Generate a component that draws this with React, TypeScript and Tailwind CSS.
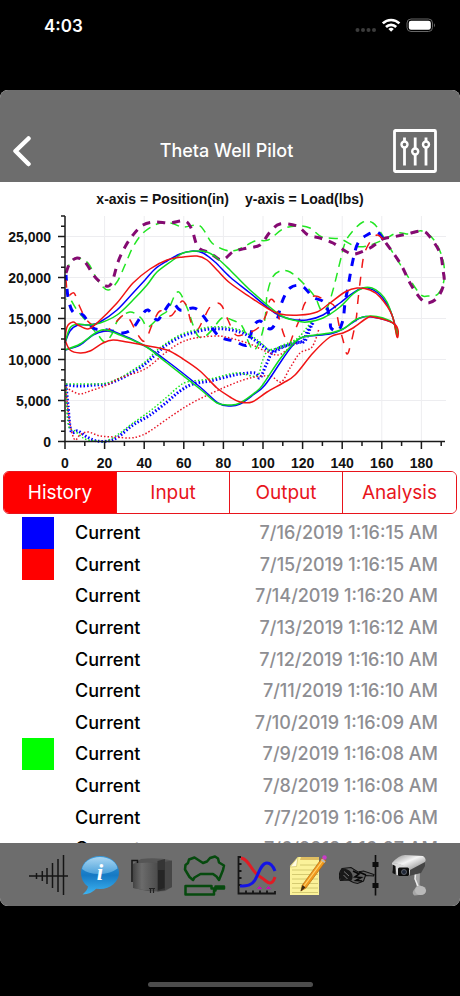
import { useState } from "react";

type Point = [number, number];

type Series = {
  color: string;
  width: number;
  dash?: string;
  points: string;
};

function parse(points: string): Point[] {
  return points
    .trim()
    .split(/\s+/)
    .map((pair) => pair.split(",").map(Number) as Point);
}

/* Catmull-Rom spline through the sampled points. */
function curve(source: string): string {
  const p = parse(source);
  let d = `M${p[0][0]} ${p[0][1]}`;
  for (let i = 0; i < p.length - 1; i++) {
    const a = p[i - 1] ?? p[i];
    const b = p[i];
    const c = p[i + 1];
    const e = p[i + 2] ?? c;
    d += `C${b[0] + (c[0] - a[0]) / 6} ${b[1] + (c[1] - a[1]) / 6} ${c[0] - (e[0] - b[0]) / 6} ${c[1] - (e[1] - b[1]) / 6} ${c[0]} ${c[1]}`;
  }
  return d;
}

const BLUE = "#0000ff";
const RED = "#ff0000";
const GREEN = "#00ff00";

const series: Series[] = [
  {
    color: "#22e622",
    width: 1.5,
    dash: "9 6",
    points:
      "66,273 70,263 77,258 88,263 98,281 108,290 117,282 125,265 133,247 143,233 157,224 170,223 183,227 198,225 205,232 212,243 225,250 237,250 255,241 268,240 283,229 297,226 310,228 322,237 340,239 355,246 367,246 383,240 397,233 410,234 422,231 434,240 443,260 444,280 438,294 428,296 420,294 405,272 390,248 381,233 373,223 363,222 352,232 345,243 340,262 333,290 327,308 321,310 315,297 303,283 290,272 280,271 272,278 267,295 266,310 263,330 258,345 253,350 248,341 242,326 232,320 222,318 212,330 204,337 198,336 193,325 188,310 180,293 175,295 168,310 160,316 148,327 141,318 130,312 118,320 112,334 105,342 98,335 87,322 77,310 70,299 66,299",
  },
  {
    color: BLUE,
    width: 3,
    dash: "8 8",
    points:
      "383,239 377,232 367,235 358,243 353,260 348,287 345,303 343,320 338,331 331,328 330,320 325,303 313,297 302,286 290,288 282,302 277,320 270,329 260,321 253,327 247,345 234,341 220,337 210,325 200,312 193,308 180,310 172,302 163,313 157,320 148,310 142,315 133,328 123,333 107,330 93,328 83,315 73,312 68,297 66,275",
  },
  {
    color: "#850a72",
    width: 3,
    dash: "8 7",
    points:
      "66,273 70,263 77,258 85,262 95,277 106,286 112,282 118,262 125,247 133,235 143,225 155,222 170,223 185,221 192,230 198,247 210,253 222,260 233,252 247,248 260,245 270,232 280,224 297,226 308,235 320,238 333,243 347,252 355,254 370,248 383,239 393,237 407,234 422,231 430,237 440,253 443,270 444,283 438,297 428,303 420,298 410,283 400,263 383,239",
  },
  {
    color: "#f01818",
    width: 1.5,
    dash: "9 9",
    points:
      "383,239 377,235 370,242 364,255 361,275 358,300 356,320 351,343 347,354 343,340 339,325 335,307 328,302 315,296 305,303 300,318 293,335 289,344 284,335 279,318 275,303 270,300 266,315 258,328 247,333 236,335 228,320 222,306 217,303 210,307 203,320 197,330 191,322 187,307 182,301 176,310 170,316 160,311 152,325 145,341 138,335 130,320 124,315 115,323 106,331 94,326 86,319 79,305 74,293 68,295 66,280",
  },
  {
    color: BLUE,
    width: 3,
    dash: "1.5 2",
    points:
      "66,385 80,386 95,385 107,384 120,379 133,372 145,364 155,355 165,346 180,337 195,332 210,329 225,329 240,332 250,337 260,344 272,352 283,347 293,343 303,341 307,332 313,322",
  },
  {
    color: BLUE,
    width: 3,
    dash: "1.5 2",
    points:
      "66,385 68,405 71,431 78,431 87,437 97,441 108,441 118,437 133,425 150,415 167,402 180,391 193,384 210,381 230,376 240,374 255,373 260,378 267,363 275,350 297,343 305,341 310,329 313,323",
  },
  {
    color: "#18e818",
    width: 1.5,
    dash: "1.5 2",
    points:
      "66,384 80,384 95,384 107,383 120,378 133,370 145,362 155,352 165,344 180,335 195,330 210,327 225,327 240,330 250,335 260,342 270,350 283,345 293,341 300,336 312,321",
  },
  {
    color: "#18e818",
    width: 1.5,
    dash: "1.5 2",
    points:
      "66,388 67,412 69,427 75,431 85,439 97,441 107,441 120,433 133,423 150,411 167,397 177,388 187,382 210,379 230,374 240,373 257,376 262,362 268,351 283,347 296,341",
  },
  {
    color: "#e81828",
    width: 1.5,
    dash: "1.5 2",
    points:
      "66,387 72,391 80,394 90,391 107,385 120,378 145,369 165,353 180,343 195,338 217,336 230,338 250,344 265,351 278,355 288,349 297,342",
  },
  {
    color: "#e81828",
    width: 1.5,
    dash: "1.5 2",
    points:
      "66,390 68,410 71,429 75,440 80,435 88,432 100,436 115,437 130,438 140,436 150,431 170,417 190,404 210,394 230,385 250,378 270,376 281,382 290,368 300,353 312,347 319,329",
  },
  {
    color: BLUE,
    width: 1.5,
    points:
      "65,350 80,345 93,335 105,331 115,332 145,346 167,361 200,387 218,403 230,406 240,404 253,395 265,385 282,360 293,345 303,337 330,334 343,329 360,318 372,317 393,323 397,334 393,318 387,304 378,293 368,288 360,289 350,295 340,303 323,315 307,320 290,319 275,313 250,293 230,277 215,262 203,253 193,251 180,254 167,261 155,269 145,280 133,293 117,310 100,322 90,325 78,325 70,331 65,343",
  },
  {
    color: "#10dc20",
    width: 1.5,
    points:
      "65,350 80,344 97,332 106,330 120,335 145,346 167,363 200,389 217,403 230,405 240,403 257,391 264,383 280,359 292,345 303,337 330,333 343,329 357,319 370,316 383,318 393,323 397,330 397,336 395,327 393,318 387,302 380,293 372,288 363,288 353,294 340,307 323,318 307,322 297,321 280,315 250,290 230,270 217,258 207,252 197,251 183,253 173,260 157,272 147,285 133,300 117,315 100,323 88,325 78,324 70,328 65,343",
  },
  {
    color: "#f01414",
    width: 1.5,
    points:
      "65,340 70,350 80,353 90,351 103,343 113,340 127,342 143,345 167,350 183,359 200,371 217,388 230,397 240,402 252,402 267,392 283,383 295,375 313,353 330,337 343,333 353,328 367,318 373,317 393,323 398,330 397,337 392,315 380,297 370,290 357,288 345,292 330,303 317,312 300,315 280,314 267,308 250,297 230,283 217,270 207,260 197,256 183,257 167,260 150,269 133,283 117,303 97,323 88,329 78,325 73,322 67,327 65,340",
  },
];

const ORIGIN_X = 65;
const ORIGIN_Y = 441.5;
const STEP_X = 39.6;
const STEP_Y = 41;
const yLabels = ["0", "5,000", "10,000", "15,000", "20,000", "25,000"];
const xLabels = [0, 20, 40, 60, 80, 100, 120, 140, 160, 180];

function Chart() {
  return (
    <svg viewBox="0 210 460 260" className="block w-full" role="img" aria-label="Load against position">
      <g stroke="#ededf0" strokeWidth="1">
        {yLabels.slice(1).map((label, i) => (
          <line key={label} x1={ORIGIN_X} x2="446" y1={ORIGIN_Y - (i + 1) * STEP_Y} y2={ORIGIN_Y - (i + 1) * STEP_Y} />
        ))}
        {xLabels.slice(1).map((label, i) => (
          <line key={label} y1="216" y2={ORIGIN_Y} x1={ORIGIN_X + (i + 1) * STEP_X} x2={ORIGIN_X + (i + 1) * STEP_X} />
        ))}
      </g>
      <g fill="none" strokeLinejoin="round">
        {series.map((s, i) => (
          <path key={i} d={curve(s.points)} stroke={s.color} strokeWidth={s.width} strokeDasharray={s.dash} />
        ))}
      </g>
      <g stroke="#1a1a1a" strokeWidth="1.5">
        <path d="M65 216V442M64 441.5H445" />
        {Array.from({ length: 23 }, (_, i) => (
          <line key={i} x1={i % 4 === 0 ? 58 : 61} x2="65" y1={ORIGIN_Y - (i * STEP_Y) / 4} y2={ORIGIN_Y - (i * STEP_Y) / 4} />
        ))}
        {Array.from({ length: 20 }, (_, i) => (
          <line key={i} y1="442" y2={i % 2 === 0 ? 449 : 446} x1={ORIGIN_X + (i * STEP_X) / 2} x2={ORIGIN_X + (i * STEP_X) / 2} />
        ))}
      </g>
      <g className="fill-[#111111] font-['Liberation_Sans',Arial,sans-serif] text-[14px] font-bold">
        {yLabels.map((label, i) => (
          <text key={label} x="51" y={447 - i * STEP_Y} textAnchor="end">
            {label}
          </text>
        ))}
        {xLabels.map((label, i) => (
          <text key={label} x={ORIGIN_X + i * STEP_X} y="468" textAnchor="middle">
            {label}
          </text>
        ))}
      </g>
    </svg>
  );
}

function StatusBar() {
  return (
    <div className="flex h-[90px] shrink-0 items-start justify-between pt-[15px] pr-6 pl-11 text-white">
      <span className="text-[17px] leading-[22px] font-semibold">4:03</span>
      <svg width="82" height="20" viewBox="354 15 82 20" className="block" aria-hidden="true">
        <g fill="#3c3c3c">
          <circle cx="357.500" cy="30" r="2" />
          <circle cx="363" cy="30" r="2" />
          <circle cx="368.500" cy="30" r="2" />
          <circle cx="374" cy="30" r="2" />
        </g>
        <g fill="none" stroke="#fff" strokeWidth="2.600">
          <path d="M382.800 23.400a11.800 11.800 0 0 1 16.600 0" />
          <path d="M386 27a7.200 7.200 0 0 1 10.200 0" />
        </g>
        <path d="M391.100 31.800l-2.700-2.700a3.800 3.800 0 0 1 5.400 0z" fill="#fff" />
        <rect x="407" y="19" width="25.500" height="12.500" rx="4" fill="none" stroke="#666" />
        <rect x="408.800" y="20.800" width="22" height="9" rx="2.300" fill="#fff" />
        <path d="M434 23.300q2 2 0 4z" fill="#666" />
      </svg>
    </div>
  );
}

const tabs = ["History", "Input", "Output", "Analysis"];

const rows = [
  { date: "7/16/2019 1:16:15 AM", color: BLUE },
  { date: "7/15/2019 1:16:15 AM", color: RED },
  { date: "7/14/2019 1:16:20 AM" },
  { date: "7/13/2019 1:16:12 AM" },
  { date: "7/12/2019 1:16:10 AM" },
  { date: "7/11/2019 1:16:10 AM" },
  { date: "7/10/2019 1:16:09 AM" },
  { date: "7/9/2019 1:16:08 AM", color: GREEN },
  { date: "7/8/2019 1:16:08 AM" },
  { date: "7/7/2019 1:16:06 AM" },
  { date: "7/6/2019 1:16:07 AM" },
];

function ValveIcon() {
  return (
    <svg width="42" height="44" viewBox="28 852 42 44" fill="none" stroke="#151515" strokeWidth="1.5">
      <path d="M29 875H68M36.500 872v6M42.300 870v10M47 867v16M52.500 862v25M58 858v33M63.500 854v40" />
    </svg>
  );
}

function InfoIcon() {
  return (
    <svg width="42" height="44" viewBox="80 852 42 44">
      <defs>
        <linearGradient id="bubble" x1="0" y1="0" x2="0" y2="1">
          <stop offset="0" stopColor="#3a9bdc" />
          <stop offset=".5" stopColor="#1579c4" />
          <stop offset="1" stopColor="#3db4f2" />
        </linearGradient>
        <linearGradient id="gloss" x1="0" y1="0" x2="0" y2="1">
          <stop offset="0" stopColor="#d8effc" />
          <stop offset="1" stopColor="#63b2e4" />
        </linearGradient>
      </defs>
      <path d="M101 855c10.500 0 19 7.200 19 16.500S111.500 888 101 888l-4-.2c-3 3.500-8 5.700-13.500 5.700 3-2.500 5-5 5.500-8-4.500-3-7-8-7-14C82 862 90.500 855 101 855z" fill="url(#bubble)" />
      <path d="M101 856c9.300 0 17 5.500 17.500 11.500-5 3.800-12 5.500-18.500 5.500-7 0-13-1.700-17-5C84 861.500 91.700 856 101 856z" fill="url(#gloss)" opacity=".7" />
      <text x="101" y="879" textAnchor="middle" className="fill-white font-['Liberation_Serif',serif] text-[23px] font-bold italic">i</text>
    </svg>
  );
}

function BoxIcon() {
  return (
    <svg width="44" height="44" viewBox="131 852 44 44">
      <defs>
        <linearGradient id="door">
          <stop offset="0" stopColor="#444" />
          <stop offset=".35" stopColor="#6b6b6b" />
          <stop offset="1" stopColor="#4b4b4b" />
        </linearGradient>
      </defs>
      <path d="M134 863l8-4 17-1 14 2.500V886l-7 4-7.500.5-10-.5-14-3z" fill="#505050" />
      <path d="M134 863q12-3 25-1v28q-13 0-25-3z" fill="url(#door)" />
      <path d="M142 858q16-2 31 1.500l-8 1.500-6 1q-13-2-25 1z" fill="#555" />
      <path d="M158.500 860l7.500-2v31l-7.500 1.500z" fill="#353535" />
      <path d="M159 869h6.500v18l-6.500 2z" fill="#252525" />
      <path d="M166 861l7-1.500V886l-7 3z" fill="#464646" />
      <path d="M138.500 862v-2.500h-5.500V881" fill="none" stroke="#151515" strokeWidth="1.500" />
      <path d="M150 887.500h6M151.500 888v4M154.500 888v4" stroke="#222" strokeWidth="1.200" />
    </svg>
  );
}

function CardIcon() {
  return (
    <svg width="44" height="44" viewBox="183 852 44 44" fill="none" stroke="#064a0e" strokeWidth="2.500" strokeLinejoin="round">
      <path d="M189 858.500L194.500 856.500 203 862 207 860.500 210 857 215 855.500 218 857.500 219 861.500 224 864.500 223 869 219 879 216.500 875.500 213 873H200.500L194.500 876.500 193 879 189.500 876 185 868.500 185.500 864 188 862z" />
      <path d="M185.500 885H211.500V887.500H224V885.500H215.500V889.500H214V893.500H185.500z" />
    </svg>
  );
}

function TrendIcon() {
  return (
    <svg width="42" height="44" viewBox="236 852 42 44" fill="none">
      <path d="M240 856h-2.500V892.500H274v-2.500M238 863h2.500M238 870h2.500M238 877h2.500M238 884h2.500M245 892v-2.500M252 892v-2.500M259 892v-2.500M266 892v-2.500" stroke="#151515" strokeWidth="1.800" />
      <path d="M240 857C248 858 250 870 258 875S266 882 269 882q3 0 5-6" stroke="#e01c24" strokeWidth="3" />
      <path d="M239 885c8 0 12-1 15-6 4-7 6-17 12-17 4 0 6 3 8 8" stroke="#1414e6" strokeWidth="3" />
      <path d="M256.500 887.500l2-2 2 2zM265.500 887.500l2-2 2 2z" fill="#c410b4" stroke="#c410b4" />
    </svg>
  );
}

function NoteIcon() {
  return (
    <svg width="42" height="44" viewBox="288 852 42 44">
      <path d="M298 856H319V894H290V865z" fill="#fbf29a" />
      <path d="M298 856l-1.500 9.500L290 866z" fill="#fffce0" stroke="#c9bb58" strokeWidth=".6" />
      <path d="M301 856H319V859H300z" fill="#dfbe62" />
      <path d="M300 864H318M292 869H318M292 873.500H318M292 878H318M292 882.500H318M292 887H318M292 891.500H318" stroke="#cfc56c" strokeWidth=".9" />
      <path d="M322 857l4 3L306 887l-5 3 1-5.500z" fill="#f19a1f" stroke="#a86009" strokeWidth=".6" />
      <path d="M323.500 858.500L304 885" stroke="#ffd36c" strokeWidth="1.200" />
      <path d="M302.500 884l3 2.500-5 4z" fill="#3a2a16" />
      <circle cx="324.500" cy="856.500" r="2.200" fill="#c83cc8" />
      <path d="M321.500 858.500l3.500 2.700" stroke="#b7b7b7" strokeWidth="1.800" />
    </svg>
  );
}

function HandIcon() {
  return (
    <svg width="42" height="44" viewBox="340 852 42 44">
      <path d="M376.500 854V894.500" stroke="#0d0d0d" strokeWidth="1.600" />
      <path d="M373.500 861h6v5h-6zM373.500 882h6v5h-6z" fill="#0d0d0d" />
      <path d="M343 867.500l9-1 7 4.500 5.500-1 10.500 3.500-.5 1.500-8-.5-2 5.500-6 2.500-4-1-5-2.500-8 .5q-3-6 1.500-12z" fill="#606060" stroke="#111" strokeWidth="1.100" />
      <path d="M343 867.500q7 0 9.500 4.500t-.5 8q-5-2-10-.5-3-6 1-12z" fill="#181818" />
      <path d="M345 870.500l5 4.500M344.500 874l4 4" stroke="#777" strokeWidth="1" />
      <path d="M354 870l6 3-4 3 6 .5-5 3 6 .5M360 871l7 3" fill="none" stroke="#080808" strokeWidth="1.600" />
    </svg>
  );
}

function CameraIcon() {
  return (
    <svg width="42" height="44" viewBox="390 852 42 44">
      <defs>
        <linearGradient id="shell" x1="0" y1="0" x2="1" y2="1">
          <stop offset="0" stopColor="#8c8c8c" />
          <stop offset=".45" stopColor="#f4f4f4" />
          <stop offset="1" stopColor="#777" />
        </linearGradient>
      </defs>
      <path d="M414 872l6-1-.5 13 5 3q3 4-1 6.500l-9 1q-3-2-1-5l3-4z" fill="#a6a6a6" />
      <ellipse cx="420.500" cy="889.500" rx="5.500" ry="4.500" fill="#b9b9b9" />
      <path d="M415.500 873l-.5 5 3 7" stroke="#eee" strokeWidth="1.500" fill="none" />
      <path d="M409 868l16-9v6l-4 7-12 3z" fill="#454545" />
      <path d="M392 862q7-8 13-8l18 1q4 3 2 6l-15 8q-7-6-18-7z" fill="url(#shell)" />
      <path d="M392 862q11 0 18 7l-.5 5.500-13-.5-1-8.500-.500 5-2.500-1z" fill="#d9d9d9" />
      <path d="M392.500 863.500l3 1.500v8.500l-3-1.500z" fill="#111" />
      <rect x="398" y="866.500" width="11" height="8.500" rx="1.500" fill="#0c0c0c" />
      <circle cx="404" cy="871" r="2.500" fill="#202838" stroke="#6c7078" strokeWidth=".8" />
    </svg>
  );
}

const tools = [
  { name: "Valve check", Icon: ValveIcon },
  { name: "Well information", Icon: InfoIcon },
  { name: "Controller", Icon: BoxIcon },
  { name: "Dynamometer cards", Icon: CardIcon },
  { name: "Trends", Icon: TrendIcon },
  { name: "Notes", Icon: NoteIcon },
  { name: "Manual control", Icon: HandIcon },
  { name: "Camera", Icon: CameraIcon },
];

export default function App() {
  const [active, setActive] = useState("History");

  return (
    <div className="flex h-screen flex-col bg-black font-[Inter,sans-serif]">
      <StatusBar />
      <main className="flex min-h-0 flex-1 flex-col overflow-hidden rounded-lg bg-white">
        <header className="flex h-[92px] shrink-0 items-end justify-between bg-[#6d6d6d] px-3 pb-[9px] text-white">
          <button type="button" aria-label="Back" className="flex h-11 w-12 items-center">
            <svg width="20" height="32" viewBox="0 0 20 32" fill="none" stroke="currentColor" strokeWidth="4.500" strokeLinecap="round" strokeLinejoin="round">
              <path d="M16.500 3.500L3.500 16 16.500 29" />
            </svg>
          </button>
          <h1 className="text-[18px] leading-[44px] font-medium">Theta Well Pilot</h1>
          <button type="button" aria-label="Settings" className="mr-[11px]">
            <svg width="44" height="44" viewBox="0 0 44 44" fill="none" stroke="currentColor" strokeWidth="2.800" className="block">
              <rect x="1.500" y="1.500" width="41" height="41" rx="1" />
              <path d="M11.500 8.500v3.500M11.500 19v17.500M22.200 8.500V19M22.200 26v10.500M33 8.500v3.500M33 19v17.500" />
              <g strokeWidth="2.400">
                <circle cx="11.500" cy="15.500" r="3" />
                <circle cx="22.200" cy="22.500" r="3" />
                <circle cx="33" cy="15.500" r="3" />
              </g>
            </svg>
          </button>
        </header>

        <section className="shrink-0">
          <p className="flex h-7 items-center justify-center gap-4 pt-1.5 font-['Liberation_Sans',Arial,sans-serif] text-[14px] font-bold text-[#111111]">
            <span>x-axis = Position(in)</span>
            <span>y-axis = Load(lbs)</span>
          </p>
          <Chart />
        </section>

        <div role="tablist" className="mx-[3px] mt-px grid h-[43px] shrink-0 grid-cols-4 divide-x divide-[#e8141c] overflow-hidden rounded-md border border-[#e8141c]">
          {tabs.map((tab) => (
            <button
              key={tab}
              type="button"
              role="tab"
              aria-selected={tab === active}
              onClick={() => setActive(tab)}
              className={tab === active ? "bg-[#ff0000] pt-0.5 text-[19px] text-white" : "bg-white pt-0.5 text-[19px] text-[#e8141c]"}
            >
              {tab}
            </button>
          ))}
        </div>

        <div className="min-h-0 flex-1 overflow-hidden pt-[3px]">
          <ul className="grid h-[348px] auto-rows-fr">
            {rows.map((row) => (
              <li key={row.date} className="flex items-stretch px-[22px] text-[18px] leading-8 font-medium">
                <span className="mr-[21px] w-8" style={{ backgroundColor: row.color }} />
                <span className="flex-1 text-black">Current</span>
                <time className="text-[#8e8e92]">{row.date}</time>
              </li>
            ))}
          </ul>
        </div>

        <nav className="flex h-[63px] shrink-0 items-center justify-between bg-[#6d6d6d] px-7">
          {tools.map(({ name, Icon }) => (
            <button key={name} type="button" aria-label={name}>
              <Icon />
            </button>
          ))}
        </nav>
      </main>
      <div className="flex h-[90px] shrink-0 items-end justify-center pb-[9px]">
        <div className="h-[5px] w-[165px] rounded-full bg-[#4c4c4c]" />
      </div>
    </div>
  );
}
